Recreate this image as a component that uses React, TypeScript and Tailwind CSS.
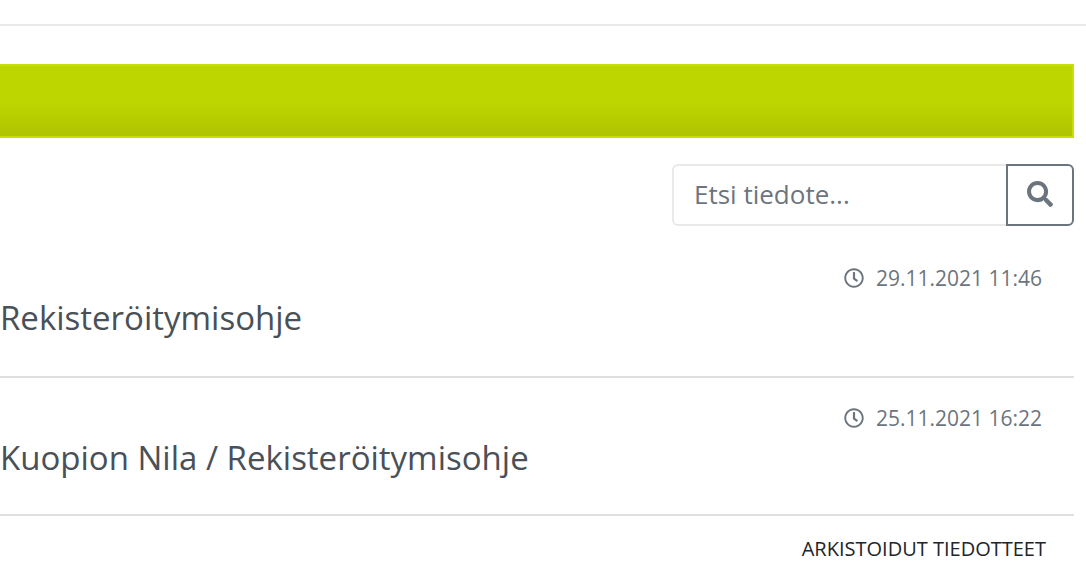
import { FaRegClock, FaSearch } from 'react-icons/fa'

type Bulletin = {
  id: number
  title: string
  date: string
}

const bulletins: Bulletin[] = [
  { id: 1, title: 'Rekisteröitymisohje', date: '29.11.2021 11:46' },
  { id: 2, title: 'Kuopion Nila / Rekisteröitymisohje', date: '25.11.2021 16:22' }
]

function SearchForm() {
  return (
    <form className="flex justify-end" onSubmit={e => e.preventDefault()}>
      <input
        type="text"
        aria-label="Etsi tiedote"
        placeholder="Etsi tiedote..."
        className="w-[334px] h-[62px] px-5 pb-0.5 text-[26px] border-2 border-r-0 border-[#e9e9e9] rounded-l-md text-[#495057] placeholder:text-[#6c757d] outline-none"
      />
      <button
        type="submit"
        aria-label="Hae"
        className="w-17 h-[62px] pb-0.5 flex items-center justify-center border-2 border-[#6c757d] rounded-r-md text-[#6c757d]"
      >
        <FaSearch size={26} />
      </button>
    </form>
  )
}

function BulletinRow({ item }: { item: Bulletin }) {
  return (
    <li className="border-b-2 border-[#dee0e2] pt-6 pb-8 first:pb-[34px]">
      <div className="flex justify-end items-center gap-3 pr-8 text-[21px] leading-8 text-[#6c757d]">
        <FaRegClock size={20} />
        <time>{item.date}</time>
      </div>
      <h2 className="text-[33px] leading-12 text-[#495057]">
        <a href="#">{item.title}</a>
      </h2>
    </li>
  )
}

export default function App() {
  return (
    <div className="min-h-screen bg-white pt-6 font-['Open_Sans','Noto_Sans',sans-serif]">
      <div className="border-t-2 border-[#e9e9e9]" />
      <main className="pr-3 pt-[38px]">
        <div className="h-[74px] border-2 border-l-0 border-[#c8de0a] bg-linear-to-b from-[#bed600] from-50% to-[#b0c400]" />
        <div className="pt-[26px]">
          <SearchForm />
        </div>
        <ul className="pt-3">
          {bulletins.map(item => (
            <BulletinRow key={item.id} item={item} />
          ))}
        </ul>
        <div className="flex justify-end pr-7 pt-[17px]">
          <a href="#" className="text-xl leading-8 text-[#212529]">
            ARKISTOIDUT TIEDOTTEET
          </a>
        </div>
      </main>
    </div>
  )
}
